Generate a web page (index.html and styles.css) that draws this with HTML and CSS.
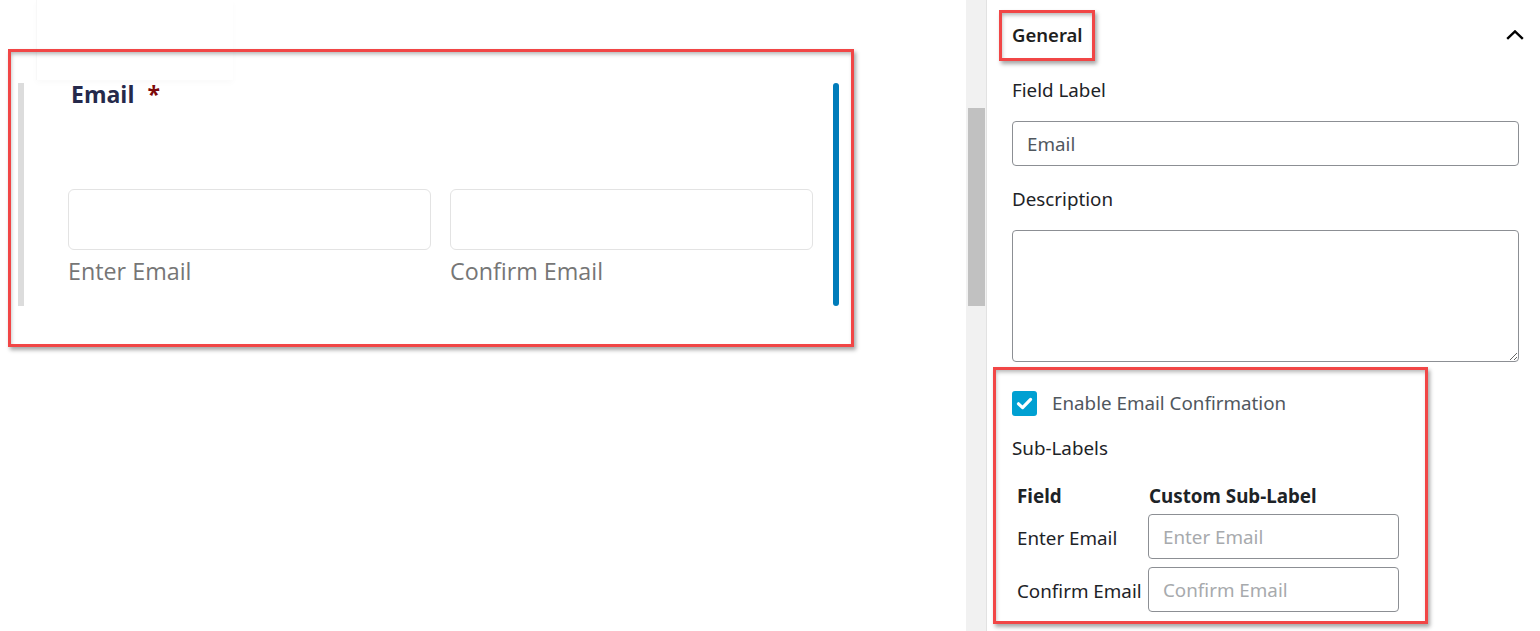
FILE: index.html
```html
<!DOCTYPE html>
<html lang="en">
<head>
<meta charset="utf-8">
<title>Email field settings</title>
<link rel="stylesheet" href="styles.css">
</head>
<body>
<div class="page">
  <main class="canvas">
    <div class="ghost"></div>
    <div class="field-card">
      <div class="field-body">
        <div class="field-label">Email <span class="req">*</span></div>
        <div class="email-pair">
          <div class="email-col">
            <input class="email-input" type="text" aria-label="Enter Email">
            <div class="sub-label">Enter Email</div>
          </div>
          <div class="email-col">
            <input class="email-input" type="text" aria-label="Confirm Email">
            <div class="sub-label">Confirm Email</div>
          </div>
        </div>
      </div>
      <div class="active-bar"></div>
    </div>
  </main>

  <div class="scrollbar"><div class="thumb"></div></div>

  <aside class="panel">
    <div class="panel-head">
      <span class="panel-title">General</span>
      <svg class="chevron" width="18" height="10" viewBox="0 0 18 10" aria-hidden="true">
        <path d="M1.2 8.8 L9 1.4 L16.8 8.8" fill="none" stroke="#000" stroke-width="2.4"/>
      </svg>
    </div>

    <label class="set-label first">Field Label</label>
    <input class="set-input" type="text" value="Email">

    <label class="set-label desc">Description</label>
    <textarea class="set-textarea"></textarea>

    <div class="check-row">
      <span class="checkbox">
        <svg width="25" height="25" viewBox="0 0 25 25" aria-hidden="true">
          <path d="M6.5 12.8 L10.6 16.6 L18.6 8.4" fill="none" stroke="#fff" stroke-width="3.2" stroke-linecap="round" stroke-linejoin="round"/>
        </svg>
      </span>
      <span class="check-text">Enable Email Confirmation</span>
    </div>

    <div class="set-label sublabels">Sub-Labels</div>

    <div class="sub-head">
      <span class="cell-name">Field</span>
      <span class="cell-custom">Custom Sub-Label</span>
    </div>
    <div class="sub-row">
      <span class="cell-name">Enter Email</span>
      <input class="sub-input" type="text" placeholder="Enter Email">
    </div>
    <div class="sub-row">
      <span class="cell-name">Confirm Email</span>
      <input class="sub-input" type="text" placeholder="Confirm Email">
    </div>
  </aside>

  <div class="annot annot-field"></div>
  <div class="annot annot-general"></div>
  <div class="annot annot-confirm"></div>
</div>
</body>
</html>
```

FILE: styles.css
```css
* { box-sizing: border-box; }

html, body {
  margin: 0;
  padding: 0;
  background: #fff;
}

.page {
  position: relative;
  display: flex;
  width: 1540px;
  height: 631px;
  overflow: hidden;
}

/* ---------- left canvas ---------- */
.canvas {
  width: 966px;
  flex: none;
  font-family: "Open Sans", "Noto Sans", sans-serif;
}

.ghost {
  margin-left: 36px;
  width: 197px;
  height: 80px;
  border-left: 1px solid #f8f8f8;
  box-shadow: 0 3px 6px rgba(0, 0, 0, 0.025);
}

.field-card {
  display: flex;
  margin-top: 3px;
  margin-left: 18px;
  width: 821px;
  height: 223px;
  border-left: 6px solid #dcdcdc;
}

.field-body {
  flex: 1;
  padding: 0 20px 0 44px;
}

.field-label {
  font-size: 23px;
  line-height: 22px;
  font-weight: 700;
  color: #25294b;
  padding-left: 3px;
}

.req {
  color: #7d0a0a;
  margin-left: 7px;
}

.email-pair {
  display: flex;
  gap: 19px;
  margin-top: 84px;
}

.email-col {
  width: 363px;
}

.email-input {
  display: block;
  width: 363px;
  height: 61px;
  margin: 0;
  border: 1px solid #e3e3e3;
  border-radius: 6px;
  background: #fff;
  outline: none;
}

.sub-label {
  margin-top: 6px;
  font-size: 23.3px;
  line-height: 31px;
  color: #767676;
}

.active-bar {
  width: 6px;
  flex: none;
  background: #007cba;
  border-radius: 3px;
}

/* ---------- scrollbar ---------- */
.scrollbar {
  width: 20px;
  flex: none;
  background: #f1f1f1;
  padding-top: 108px;
}

.thumb {
  margin-left: 2px;
  width: 17px;
  height: 198px;
  background: #c1c1c1;
}

/* ---------- right panel ---------- */
.panel {
  flex: 1;
  border-left: 1px solid #e2e2e2;
  padding: 22px 21px 0 25px;
  font-family: "Noto Sans", "Open Sans", sans-serif;
  font-size: 18.8px;
  line-height: 25px;
  color: #1d2327;
}

.panel-head {
  display: flex;
  justify-content: space-between;
  align-items: center;
  height: 25px;
}

.panel-title {
  font-weight: 600;
  color: #1e1e1e;
  font-size: 18.5px;
}

.chevron {
  display: block;
  margin-right: -5px;
  margin-top: 0;
}

.set-label {
  display: block;
  height: 25px;
}

.set-label.first { margin-top: 31px; }
.set-label.desc { margin-top: 21px; }
.set-label.sublabels { margin-top: 20px; }

.set-input {
  display: block;
  width: 100%;
  height: 45px;
  margin: 18px 0 0;
  padding: 0 14px;
  border: 1px solid #8c8f94;
  border-radius: 4px;
  font-family: inherit;
  font-size: 18.8px;
  color: #50575e;
  background: #fff;
  outline: none;
}

.set-textarea {
  display: block;
  width: 100%;
  height: 132px;
  margin: 18px 0 0;
  border: 1px solid #8c8f94;
  border-radius: 4px;
  resize: vertical;
  font-family: inherit;
  background: #fff;
  outline: none;
}

.check-row {
  display: flex;
  align-items: center;
  height: 25px;
  margin-top: 29px;
}

.checkbox {
  width: 25px;
  height: 25px;
  border-radius: 3px;
  background: #00a0d2;
  flex: none;
}

.checkbox svg { display: block; }

.check-text {
  margin-left: 15px;
  color: #50575e;
}

.sub-head {
  display: flex;
  height: 25px;
  margin-top: 23px;
  margin-bottom: 5px;
  font-weight: 700;
}

.cell-name {
  width: 136px;
  flex: none;
  padding-left: 5px;
  white-space: nowrap;
}

.cell-custom {
  padding-left: 1px;
}

.sub-row {
  display: flex;
  align-items: center;
  height: 45px;
  margin-bottom: 8px;
}

.sub-row .cell-name {
  padding-top: 3px;
}

.sub-input {
  width: 251px;
  height: 45px;
  margin: 0;
  padding: 0 14px;
  border: 1px solid #8c8f94;
  border-radius: 4px;
  font-family: inherit;
  font-size: 18.8px;
  color: #50575e;
  background: #fff;
  outline: none;
}

.sub-input::placeholder {
  color: #a7aaad;
}

/* ---------- annotation frames (overlay) ---------- */
.annot {
  position: absolute;
  border: 3px solid #f14646;
  box-shadow: 2px 3px 4px rgba(0, 0, 0, 0.35), inset 1px 3px 4px -1px rgba(0, 0, 0, 0.3);
  pointer-events: none;
}

.annot-field {
  left: 8px;
  top: 49px;
  width: 846px;
  height: 298px;
}

.annot-general {
  left: 999px;
  top: 10px;
  width: 96px;
  height: 51px;
}

.annot-confirm {
  left: 993px;
  top: 367px;
  width: 435px;
  height: 257px;
}
```
